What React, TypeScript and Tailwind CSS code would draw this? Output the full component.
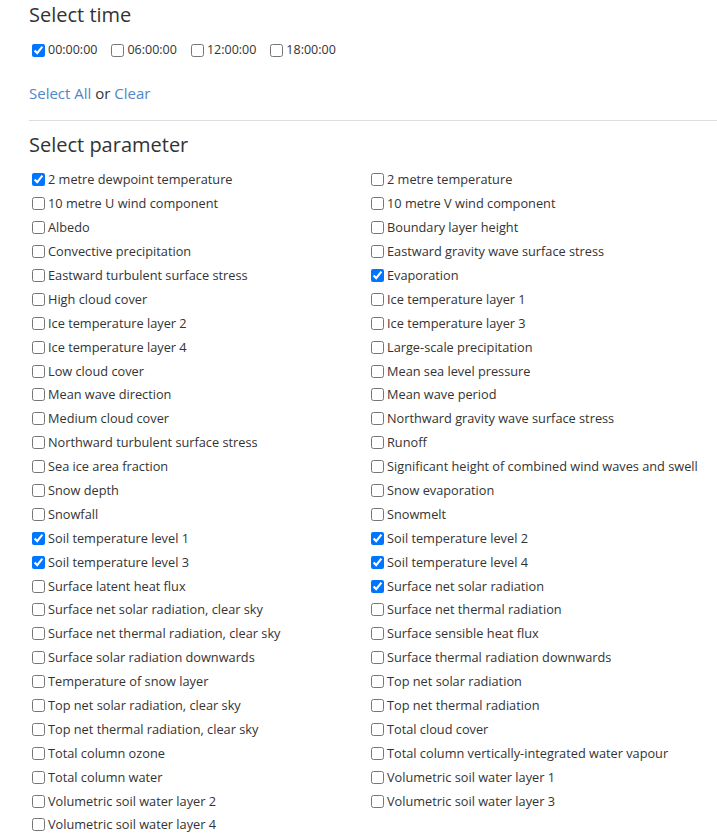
import React from 'react';

const times = [
  { label: '00:00:00', checked: true },
  { label: '06:00:00', checked: false },
  { label: '12:00:00', checked: false },
  { label: '18:00:00', checked: false },
];

// left/right pairs, read across the rows
const params: [string, boolean][] = [
  ['2 metre dewpoint temperature', true],
  ['2 metre temperature', false],
  ['10 metre U wind component', false],
  ['10 metre V wind component', false],
  ['Albedo', false],
  ['Boundary layer height', false],
  ['Convective precipitation', false],
  ['Eastward gravity wave surface stress', false],
  ['Eastward turbulent surface stress', false],
  ['Evaporation', true],
  ['High cloud cover', false],
  ['Ice temperature layer 1', false],
  ['Ice temperature layer 2', false],
  ['Ice temperature layer 3', false],
  ['Ice temperature layer 4', false],
  ['Large-scale precipitation', false],
  ['Low cloud cover', false],
  ['Mean sea level pressure', false],
  ['Mean wave direction', false],
  ['Mean wave period', false],
  ['Medium cloud cover', false],
  ['Northward gravity wave surface stress', false],
  ['Northward turbulent surface stress', false],
  ['Runoff', false],
  ['Sea ice area fraction', false],
  ['Significant height of combined wind waves and swell', false],
  ['Snow depth', false],
  ['Snow evaporation', false],
  ['Snowfall', false],
  ['Snowmelt', false],
  ['Soil temperature level 1', true],
  ['Soil temperature level 2', true],
  ['Soil temperature level 3', true],
  ['Soil temperature level 4', true],
  ['Surface latent heat flux', false],
  ['Surface net solar radiation', true],
  ['Surface net solar radiation, clear sky', false],
  ['Surface net thermal radiation', false],
  ['Surface net thermal radiation, clear sky', false],
  ['Surface sensible heat flux', false],
  ['Surface solar radiation downwards', false],
  ['Surface thermal radiation downwards', false],
  ['Temperature of snow layer', false],
  ['Top net solar radiation', false],
  ['Top net solar radiation, clear sky', false],
  ['Top net thermal radiation', false],
  ['Top net thermal radiation, clear sky', false],
  ['Total cloud cover', false],
  ['Total column ozone', false],
  ['Total column vertically-integrated water vapour', false],
  ['Total column water', false],
  ['Volumetric soil water layer 1', false],
  ['Volumetric soil water layer 2', false],
  ['Volumetric soil water layer 3', false],
  ['Volumetric soil water layer 4', false],
];

const Check: React.FC<{ label: string; checked: boolean }> = ({ label, checked }) => (
  <label className="flex items-center">
    <input type="checkbox" defaultChecked={checked} className="ml-[3px] mr-[3px] h-[13px] w-[13px]" />
    <span>{label}</span>
  </label>
);

export default function App() {
  return (
    <div className="min-h-screen bg-white pl-[29px] text-[#333333] font-['Open_Sans',sans-serif]">
      <h2 className="h-[30px] text-[20px] leading-[30px]">Select time</h2>

      <div className="mt-[8px] flex h-6 items-center gap-[11px] text-[12.5px]">
        {times.map((t) => (
          <Check key={t.label} label={t.label} checked={t.checked} />
        ))}
      </div>

      <div className="mt-[20px] h-[22px] text-[15px] leading-[22px]">
        <a href="#" className="text-[#4f87c7]">Select All</a> or{' '}
        <a href="#" className="text-[#4f87c7]">Clear</a>
      </div>

      <hr className="mt-[16px] border-t border-[#dddddd]" />

      <h2 className="mt-[9px] h-[30px] text-[20px] leading-[30px]">Select parameter</h2>

      <div className="mt-[8px] grid grid-cols-[339px_339px] auto-rows-[23.9px] text-[12.75px]">
        {params.map(([label, checked]) => (
          <Check key={label} label={label} checked={checked} />
        ))}
      </div>
    </div>
  );
}
